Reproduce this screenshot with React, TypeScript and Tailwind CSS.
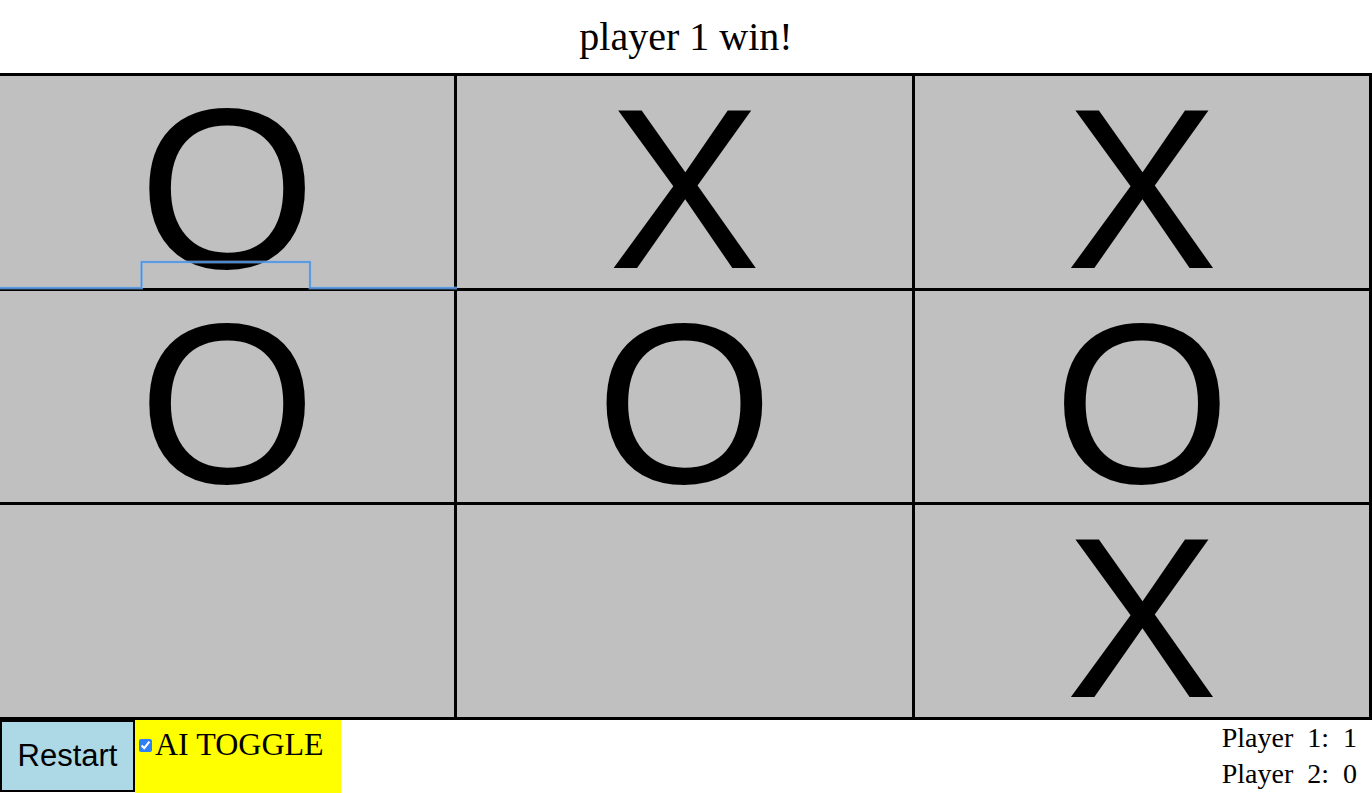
import React from "react";

type Mark = "X" | "O" | "";

const board: Mark[] = ["O", "X", "X", "O", "O", "O", "", "", "X"];

const serif = { fontFamily: '"Liberation Serif", "Times New Roman", serif' };
const sans = { fontFamily: '"Liberation Sans", Arial, Helvetica, sans-serif' };

function Cell({ mark }: { mark: Mark }) {
  return (
    <div
      className="bg-[#c0c0c0] border-r-[3px] border-b-[3px] border-black overflow-hidden pt-[23px] text-center text-[228px] leading-[180px] text-black select-none"
      style={sans}
    >
      {mark}
    </div>
  );
}

export default function App() {
  return (
    <div className="relative w-[1372px] h-[793px] overflow-hidden bg-white">
      {/* status */}
      <div className="h-[73px] flex items-center justify-center text-[40px] text-black" style={serif}>
        player 1 win!
      </div>

      {/* board */}
      <div className="grid grid-cols-3 grid-rows-[repeat(3,minmax(0,1fr))] h-[647px] border-t-[3px] border-black">
        {board.map((m, i) => (
          <Cell key={i} mark={m} />
        ))}
      </div>

      {/* controls */}
      <div className="flex items-start h-[73px]">
        <button
          className="w-[135px] h-[72px] bg-[#add8e6] border-2 border-black text-[31px] text-black"
          style={sans}
        >
          Restart
        </button>
        <div className="w-[206px] h-[73px] bg-[#ffff00] flex items-start">
          <input
            type="checkbox"
            checked
            readOnly
            className="w-[13px] h-[13px] mt-[19px] ml-[4px] mr-[3px] accent-[#2f80f6]"
          />
          <span className="text-[32px] text-black" style={serif}>
            AI TOGGLE
          </span>
        </div>
        <div
          className="ml-auto pr-[15px] text-right text-[28px] leading-[36px] [word-spacing:7px] text-black"
          style={serif}
        >
          <div>Player 1: 1</div>
          <div>Player 2: 0</div>
        </div>
      </div>

      {/* focus ring left behind on the first cell */}
      <svg
        className="absolute left-0 top-0 pointer-events-none"
        width="460"
        height="300"
        viewBox="0 0 460 300"
      >
        <polyline
          points="0,288 141.5,288 141.5,262 310,262 310,288 457,288"
          fill="none"
          stroke="#8cbcf0"
          strokeWidth="3"
          strokeOpacity="0.6"
        />
        <polyline
          points="0,288 141.5,288 141.5,262 310,262 310,288 457,288"
          fill="none"
          stroke="#4a8fdc"
          strokeWidth="1.5"
        />
      </svg>
    </div>
  );
}
